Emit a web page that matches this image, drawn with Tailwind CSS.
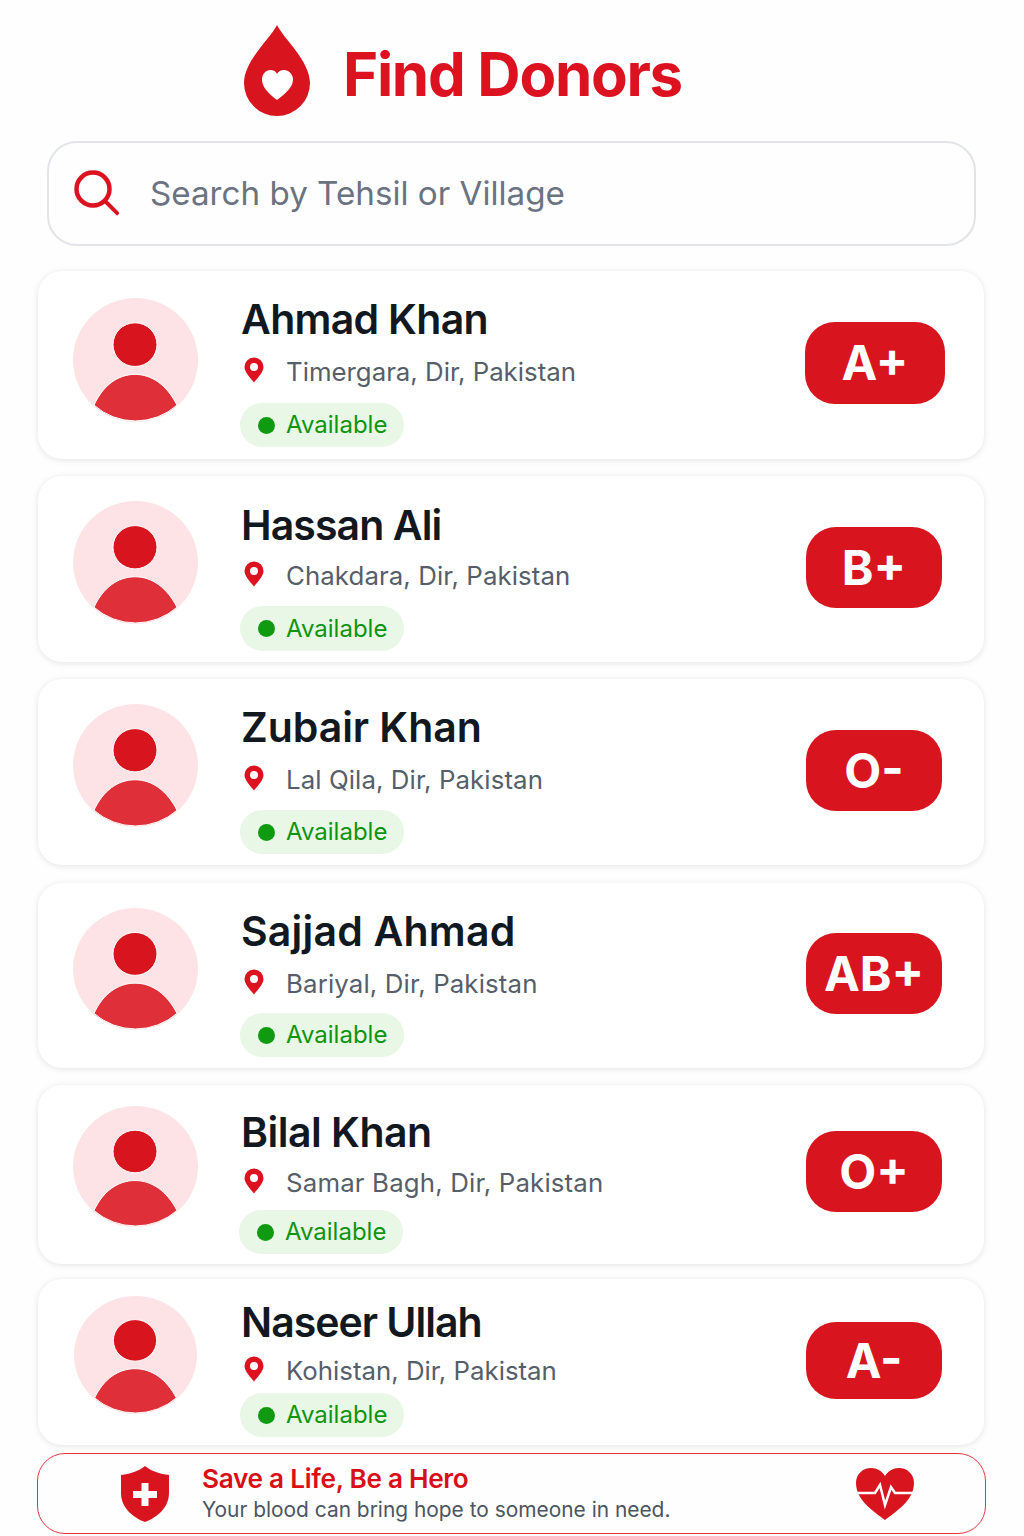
<!DOCTYPE html>
<html lang="en">
<head>
  <meta charset="UTF-8" />
  <meta name="viewport" content="width=device-width, initial-scale=1.0" />
  <title>Find Donors</title>
  <script src="https://cdn.jsdelivr.net/npm/@tailwindcss/browser@4"></script>
</head>
<body class="bg-[#fefefe] font-['Inter',sans-serif] h-[1536px] overflow-hidden">
  <!-- shared icons -->
  <svg class="hidden">
    <symbol id="avatar" viewBox="0 0 125 125">
      <circle cx="62.5" cy="62.5" r="62.5" fill="#fde3e6" />
      <circle cx="62" cy="47" r="22" fill="#d8141f" stroke="#fff" stroke-width="1" />
      <path d="M21 108C30 88 45 77 62 77C79 77 94 88 104 108A62 62 0 0 1 21 108Z" fill="#df2f38" stroke="#fff" stroke-width="1" />
    </symbol>
    <symbol id="pin" viewBox="0 0 20 26">
      <path fill-rule="evenodd" d="M10 0.5A9.5 9.5 0 0 1 19.5 10C19.5 15 14 20.500 10 25.500C6 20.500 0.500 15 0.500 10A9.500 9.500 0 0 1 10 0.500ZM10 6A4 4 0 1 0 10 14A4 4 0 1 0 10 6Z" fill="#dc1220" />
    </symbol>
  </svg>

  <!-- header -->
  <header class="h-[141px] pt-[25px] pl-[244px] flex items-start">
    <svg class="w-[66px] h-[91px]" viewBox="0 0 66 91">
      <path d="M33 0C40 14 66 36 66 58A33 33 0 0 1 0 58C0 36 26 14 33 0Z" fill="#d8141f" />
      <path d="M33 75C24 68 18 62 18 54.500C18 49 22 45 26.500 45C29.500 45 32 46.500 33 49C34.500 46.500 36.500 45 40 45C44.500 45 49 49 49 54.500C49 62 42 68 33 75Z" fill="#fff" />
    </svg>
    <h1 class="ml-[33px] mt-[13px] text-[60px] leading-[72px] font-bold tracking-[-1.300px] text-[#dc1220]">Find Donors</h1>
  </header>

  <!-- search -->
  <div class="ml-[47px] w-[929px] h-[105px] border-2 border-[#e2e4e8] rounded-[30px] flex items-center pl-[24px]">
    <svg class="w-[46px] h-[46px] -mt-[2px]" viewBox="0 0 46 46" fill="none" stroke="#dc1220" stroke-width="4.500">
      <circle cx="20" cy="19" r="16.500" />
      <path d="M32 31L44 43" stroke-linecap="square" stroke-width="4" />
    </svg>
    <input class="ml-[31px] mt-[1px] flex-1 bg-transparent outline-none text-[33.200px] text-[#6b7280] placeholder:text-[#6b7280]" placeholder="Search by Tehsil or Village" />
  </div>

  <!-- donors -->
  <main class="ml-[38px] w-[946px] mt-[25px]">
    <section class="h-[188px] bg-white rounded-[24px] shadow-[0_1px_6px_rgba(0,0,0,0.11)] flex items-start pl-[35px]">
      <svg class="w-[125px] h-[124px] mt-[27px] shrink-0" viewBox="0 0 125 125" preserveAspectRatio="none"><use href="#avatar" width="125" height="125" /></svg>
      <div class="ml-[42px] pt-[26px]">
        <h2 class="text-[41px] leading-[44px] font-semibold text-[#12181f] tracking-[-0.700px] ml-[1px]">Ahmad Khan</h2>
        <p class="mt-[15px] h-[32px] flex items-center text-[25.800px] text-[#565e6a]"><svg class="w-[20px] h-[26px] ml-[4px] mr-[22px] -mt-[4px]"><use href="#pin" /></svg>Timergara, Dir, Pakistan</p>
        <span class="mt-[15px] w-[164px] h-[44px] rounded-full bg-[#e8f7e6] flex items-center pl-[18px] text-[24px] text-[#0f9410]"><i class="w-[17px] h-[17px] rounded-full bg-[#0f9a12] mr-[11px]"></i>Available</span>
      </div>
      <div class="ml-auto mr-[39px] mt-[51px] w-[140px] h-[82px] rounded-[30px] bg-[#d8141f] text-white text-[48px] font-bold flex items-center justify-center">A+</div>
    </section>

    <section class="mt-[17px] h-[186px] bg-white rounded-[24px] shadow-[0_1px_6px_rgba(0,0,0,0.11)] flex items-start pl-[35px]">
      <svg class="w-[125px] h-[123px] mt-[25px] shrink-0" viewBox="0 0 125 125" preserveAspectRatio="none"><use href="#avatar" width="125" height="125" /></svg>
      <div class="ml-[42px] pt-[27px]">
        <h2 class="text-[41px] leading-[44px] font-semibold text-[#12181f] tracking-[-0.900px] ml-[1px]">Hassan Ali</h2>
        <p class="mt-[13px] h-[32px] flex items-center text-[25.800px] tracking-[0.090px] text-[#565e6a]"><svg class="w-[20px] h-[26px] ml-[4px] mr-[22px] -mt-[4px]"><use href="#pin" /></svg>Chakdara, Dir, Pakistan</p>
        <span class="mt-[14px] w-[164px] h-[45px] rounded-full bg-[#e8f7e6] flex items-center pl-[18px] text-[24px] text-[#0f9410]"><i class="w-[17px] h-[17px] rounded-full bg-[#0f9a12] mr-[11px]"></i>Available</span>
      </div>
      <div class="ml-auto mr-[42px] mt-[51px] w-[136px] h-[81px] rounded-[30px] bg-[#d8141f] text-white text-[48px] font-bold flex items-center justify-center">B+</div>
    </section>

    <section class="mt-[17px] h-[186px] bg-white rounded-[24px] shadow-[0_1px_6px_rgba(0,0,0,0.11)] flex items-start pl-[35px]">
      <svg class="w-[125px] h-[123px] mt-[25px] shrink-0" viewBox="0 0 125 125" preserveAspectRatio="none"><use href="#avatar" width="125" height="125" /></svg>
      <div class="ml-[42px] pt-[26px]">
        <h2 class="text-[41px] leading-[44px] font-semibold text-[#12181f] tracking-[-0.050px] ml-[1px]">Zubair Khan</h2>
        <p class="mt-[15px] h-[32px] flex items-center text-[25.800px] tracking-[0.090px] text-[#565e6a]"><svg class="w-[20px] h-[26px] ml-[4px] mr-[22px] -mt-[4px]"><use href="#pin" /></svg>Lal Qila, Dir, Pakistan</p>
        <span class="mt-[14px] w-[164px] h-[44px] rounded-full bg-[#e8f7e6] flex items-center pl-[18px] text-[24px] text-[#0f9410]"><i class="w-[17px] h-[17px] rounded-full bg-[#0f9a12] mr-[11px]"></i>Available</span>
      </div>
      <div class="ml-auto mr-[42px] mt-[51px] w-[136px] h-[81px] rounded-[30px] bg-[#d8141f] text-white text-[48px] font-bold flex items-center justify-center">O-</div>
    </section>

    <section class="mt-[18px] h-[185px] bg-white rounded-[24px] shadow-[0_1px_6px_rgba(0,0,0,0.11)] flex items-start pl-[35px]">
      <svg class="w-[125px] h-[122px] mt-[25px] shrink-0" viewBox="0 0 125 125" preserveAspectRatio="none"><use href="#avatar" width="125" height="125" /></svg>
      <div class="ml-[42px] pt-[26px]">
        <h2 class="text-[41px] leading-[44px] font-semibold text-[#12181f] tracking-[0.200px] ml-[1px]">Sajjad Ahmad</h2>
        <p class="mt-[15px] h-[32px] flex items-center text-[25.800px] tracking-[0.140px] text-[#565e6a]"><svg class="w-[20px] h-[26px] ml-[4px] mr-[22px] -mt-[4px]"><use href="#pin" /></svg>Bariyal, Dir, Pakistan</p>
        <span class="mt-[13px] w-[164px] h-[44px] rounded-full bg-[#e8f7e6] flex items-center pl-[18px] text-[24px] text-[#0f9410]"><i class="w-[17px] h-[17px] rounded-full bg-[#0f9a12] mr-[11px]"></i>Available</span>
      </div>
      <div class="ml-auto mr-[42px] mt-[50px] w-[136px] h-[81px] rounded-[30px] bg-[#d8141f] text-white text-[48px] font-bold flex items-center justify-center">AB+</div>
    </section>

    <section class="mt-[17px] h-[179px] bg-white rounded-[24px] shadow-[0_1px_6px_rgba(0,0,0,0.11)] flex items-start pl-[35px]">
      <svg class="w-[125px] h-[121px] mt-[21px] shrink-0" viewBox="0 0 125 125" preserveAspectRatio="none"><use href="#avatar" width="125" height="125" /></svg>
      <div class="ml-[42px] pt-[25px]">
        <h2 class="text-[41px] leading-[44px] font-semibold text-[#12181f] tracking-[-0.500px] ml-[1px]">Bilal Khan</h2>
        <p class="mt-[13px] h-[32px] flex items-center text-[25.800px] tracking-[0.170px] text-[#565e6a]"><svg class="w-[20px] h-[26px] ml-[4px] mr-[22px] -mt-[4px]"><use href="#pin" /></svg>Samar Bagh, Dir, Pakistan</p>
        <span class="mt-[11px] -ml-[1px] w-[164px] h-[44px] rounded-full bg-[#e8f7e6] flex items-center pl-[18px] text-[24px] text-[#0f9410]"><i class="w-[17px] h-[17px] rounded-full bg-[#0f9a12] mr-[11px]"></i>Available</span>
      </div>
      <div class="ml-auto mr-[42px] mt-[46px] w-[136px] h-[81px] rounded-[30px] bg-[#d8141f] text-white text-[48px] font-bold flex items-center justify-center">O+</div>
    </section>

    <section class="mt-[15px] h-[166px] bg-white rounded-[24px] shadow-[0_1px_6px_rgba(0,0,0,0.11)] flex items-start pl-[35px]">
      <svg class="w-[123px] h-[118px] mt-[17px] ml-[1px] shrink-0" viewBox="0 0 125 125" preserveAspectRatio="none"><use href="#avatar" width="125" height="125" /></svg>
      <div class="ml-[43px] pt-[21px]">
        <h2 class="text-[41px] leading-[44px] font-semibold text-[#12181f] tracking-[-1px] ml-[1px]">Naseer Ullah</h2>
        <p class="mt-[11px] h-[32px] flex items-center text-[25.800px] text-[#565e6a]"><svg class="w-[20px] h-[26px] ml-[4px] mr-[22px] -mt-[4px]"><use href="#pin" /></svg>Kohistan, Dir, Pakistan</p>
        <span class="mt-[6px] w-[164px] h-[44px] rounded-full bg-[#e8f7e6] flex items-center pl-[18px] text-[24px] text-[#0f9410]"><i class="w-[17px] h-[17px] rounded-full bg-[#0f9a12] mr-[11px]"></i>Available</span>
      </div>
      <div class="ml-auto mr-[42px] mt-[43px] w-[136px] h-[77px] rounded-[30px] bg-[#d8141f] text-white text-[48px] font-bold flex items-center justify-center">A-</div>
    </section>
  </main>

  <!-- footer banner -->
  <footer class="ml-[37px] mt-[8px] w-[949px] h-[81px] border-[1.500px] border-[#e5343f] rounded-[28px] flex items-center pl-[83px]">
    <svg class="w-[48px] h-[56px] shrink-0" viewBox="0 0 48 56">
      <path d="M24 0C30 5 39 8 48 9V27C48 41 37 51 24 56C11 51 0 41 0 27V9C9 8 18 5 24 0Z" fill="#d8141f" />
      <path d="M20.500 17H27.500V25H36V32H27.500V40H20.500V32H12V25H20.500Z" fill="#fff" />
    </svg>
    <div class="ml-[33px]">
      <p class="text-[26.200px] leading-[32px] font-semibold text-[#d90f18] tracking-[-0.300px]">Save a Life, Be a Hero</p>
      <p class="text-[20.900px] leading-[30px] text-[#4b5563]">Your blood can bring hope to someone in need.</p>
    </div>
    <svg class="w-[58px] h-[52px] ml-auto mr-[71px] shrink-0" viewBox="0 0 58 52">
      <path d="M29 52C17 43 0 32 0 15C0 6 7 0 15 0C21 0 26 3 29 8C32 3 37 0 43 0C51 0 58 6 58 15C58 32 41 43 29 52Z" fill="#d8141f" />
      <path d="M1 25H19L24 17L29 37L35 19L39 25H57" fill="none" stroke="#fff" stroke-width="2.500" />
    </svg>
  </footer>
</body>
</html>
